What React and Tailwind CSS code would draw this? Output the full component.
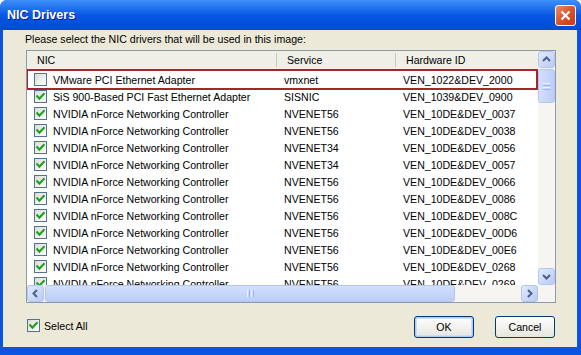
import React from "react";

const rows = [
  { nic: "VMware PCI Ethernet Adapter", svc: "vmxnet", hw: "VEN_1022&DEV_2000", checked: false, hl: true },
  { nic: "SiS 900-Based PCI Fast Ethernet Adapter", svc: "SISNIC", hw: "VEN_1039&DEV_0900", checked: true },
  { nic: "NVIDIA nForce Networking Controller", svc: "NVENET56", hw: "VEN_10DE&DEV_0037", checked: true },
  { nic: "NVIDIA nForce Networking Controller", svc: "NVENET56", hw: "VEN_10DE&DEV_0038", checked: true },
  { nic: "NVIDIA nForce Networking Controller", svc: "NVENET34", hw: "VEN_10DE&DEV_0056", checked: true },
  { nic: "NVIDIA nForce Networking Controller", svc: "NVENET34", hw: "VEN_10DE&DEV_0057", checked: true },
  { nic: "NVIDIA nForce Networking Controller", svc: "NVENET56", hw: "VEN_10DE&DEV_0066", checked: true },
  { nic: "NVIDIA nForce Networking Controller", svc: "NVENET56", hw: "VEN_10DE&DEV_0086", checked: true },
  { nic: "NVIDIA nForce Networking Controller", svc: "NVENET56", hw: "VEN_10DE&DEV_008C", checked: true },
  { nic: "NVIDIA nForce Networking Controller", svc: "NVENET56", hw: "VEN_10DE&DEV_00D6", checked: true },
  { nic: "NVIDIA nForce Networking Controller", svc: "NVENET56", hw: "VEN_10DE&DEV_00E6", checked: true },
  { nic: "NVIDIA nForce Networking Controller", svc: "NVENET56", hw: "VEN_10DE&DEV_0268", checked: true },
  { nic: "NVIDIA nForce Networking Controller", svc: "NVENET56", hw: "VEN_10DE&DEV_0269", checked: true },
];

function CheckBox({ checked }) {
  return (
    <div className="w-[13px] h-[13px] shrink-0 border border-[#52738d] bg-gradient-to-br from-[#dcdcd6] to-[#ffffff] flex items-center justify-center">
      {checked && (
        <svg width="11" height="11" viewBox="0 0 11 11">
          <path d="M2.2 5.2 L4.4 7.6 L8.8 3" fill="none" stroke="#21a121" strokeWidth="2.1" strokeLinecap="square" />
        </svg>
      )}
    </div>
  );
}

function ScrollBtn({ dir }) {
  const paths = {
    up: "M5 10 L8.5 6.5 L12 10",
    down: "M5 7 L8.5 10.5 L12 7",
    left: "M10 5 L6.5 8.5 L10 12",
    right: "M7 5 L10.5 8.5 L7 12",
  };
  return (
    <div className="w-[17px] h-[17px] shrink-0 rounded-[3px] border border-[#b3c6f0] bg-gradient-to-br from-[#e1eafe] to-[#b8cbf6] flex items-center justify-center">
      <svg width="17" height="17" viewBox="0 0 17 17" className="-m-px">
        <path d={paths[dir]} fill="none" stroke="#4d6185" strokeWidth="2" />
      </svg>
    </div>
  );
}

export default function App() {
  const font = { fontFamily: '"Liberation Sans", Arial, sans-serif' };
  return (
    <div className="w-[581px] h-[355px] bg-white" style={font}>
      <div className="w-[581px] h-[355px] flex flex-col rounded-t-[7px] overflow-hidden bg-[#0a55e0]">
        {/* Title bar */}
        <div className="h-[30px] shrink-0 flex items-center justify-between pl-[7px] pr-[5px] bg-gradient-to-b from-[#3d8ff8] via-[#0858e4] to-[#0049d6]">
          <span className="text-white font-bold text-[12.5px] [text-shadow:1px_1px_0_#0a1a8a]">NIC Drivers</span>
          <div className="w-[21px] h-[21px] rounded-[3px] border border-white bg-gradient-to-br from-[#eb8b68] via-[#d9542c] to-[#c23a14] flex items-center justify-center">
            <svg width="13" height="13" viewBox="0 0 13 13">
              <path d="M2.5 2.5 L10.5 10.5 M10.5 2.5 L2.5 10.5" stroke="white" strokeWidth="2.2" />
            </svg>
          </div>
        </div>

        {/* Body */}
        <div className="flex-1 flex flex-col ml-[3px] mr-[4px] mb-[8px] bg-[#ece9d8] pl-[22px] pr-[21px] text-[10.6px] text-black">
          <div className="mt-[3px] h-[13px] leading-[13px]">Please select the NIC drivers that will be used in this image:</div>

          {/* List */}
          <div className="mt-[4px] ml-px h-[253px] border border-[#8d99a8] bg-white flex flex-col">
            <div className="flex flex-1 min-h-0">
              <div className="flex-1 min-w-0 overflow-hidden">
                <div className="w-[560px] relative">
                  {/* header */}
                  <div className="h-[20px] flex bg-[#f0efe7] border-b-2 border-[#d7d4c6]">
                    <div className="w-[250px] shrink-0 flex items-center justify-between pl-[10px]">
                      <span className="pt-[2px]">NIC</span>
                      <div className="w-px h-[14px] bg-[#c9c6b6]" />
                    </div>
                    <div className="w-[119px] shrink-0 flex items-center justify-between pl-[10px]">
                      <span className="pt-[2px]">Service</span>
                      <div className="w-px h-[14px] bg-[#c9c6b6]" />
                    </div>
                    <div className="flex-1 flex items-center pl-[10px]">
                      <span className="pt-[2px]">Hardware ID</span>
                    </div>
                  </div>
                  {/* rows */}
                  {rows.map((r, i) => (
                    <div key={i} className="relative h-[17px] flex items-center">
                      <div className="w-[250px] shrink-0 flex items-center gap-[6px] pl-[7px] whitespace-nowrap">
                        <CheckBox checked={r.checked} />
                        <span className="pt-[2px]">{r.nic}</span>
                      </div>
                      <div className="w-[119px] shrink-0 pl-[7px] pt-[2px]">{r.svc}</div>
                      <div className="flex-1 pl-[7px] pt-[2px]">{r.hw}</div>
                      {r.hl && (
                        <div className="absolute -top-[2px] -bottom-[2px] -left-px w-[512px] border-2 border-[#a3262b] z-10 pointer-events-none" />
                      )}
                    </div>
                  ))}
                </div>
              </div>
              {/* vertical scrollbar */}
              <div className="w-[17px] shrink-0 flex flex-col bg-[#f6f5f1]">
                <ScrollBtn dir="up" />
                <div className="mt-px h-[34px] rounded-[3px] border border-[#b3c6f0] bg-gradient-to-r from-[#d3dffd] to-[#bccef7] flex flex-col items-center justify-center gap-[1px]">
                  <div className="w-[7px] h-px bg-[#eef4fe]" />
                  <div className="w-[7px] h-px bg-[#9ab4ec]" />
                  <div className="w-[7px] h-px bg-[#eef4fe]" />
                  <div className="w-[7px] h-px bg-[#9ab4ec]" />
                </div>
                <div className="flex-1" />
                <ScrollBtn dir="down" />
              </div>
            </div>
            {/* horizontal scrollbar */}
            <div className="h-[17px] shrink-0 flex">
              <div className="flex-1 flex bg-[#f6f5f1]">
                <ScrollBtn dir="left" />
                <div className="ml-px w-[410px] h-[17px] rounded-[3px] border border-[#b3c6f0] bg-gradient-to-b from-[#d3dffd] to-[#bccef7] flex items-center justify-center gap-[1px]">
                  <div className="w-px h-[7px] bg-[#eef4fe]" />
                  <div className="w-px h-[7px] bg-[#9ab4ec]" />
                  <div className="w-px h-[7px] bg-[#eef4fe]" />
                  <div className="w-px h-[7px] bg-[#9ab4ec]" />
                </div>
                <div className="flex-1" />
                <ScrollBtn dir="right" />
              </div>
              <div className="w-[17px] bg-[#f6f5f1]" />
            </div>
          </div>

          {/* bottom row */}
          <div className="mt-[13px] h-[22px] flex items-center">
            <div className="ml-[2px] flex items-center gap-[4px] -mt-[2px]">
              <CheckBox checked />
              <span className="pt-[2px]">Select All</span>
            </div>
            <div className="flex-1" />
            <button className="w-[60px] h-[22px] pt-[1px] rounded-[3px] border border-[#003c74] bg-gradient-to-b from-[#ffffff] to-[#e6e5de] shadow-[inset_0_0_0_1px_#aecbf6,inset_0_0_0_2px_#cfdcf8] text-[10.6px]" style={font}>
              OK
            </button>
            <button className="ml-[21px] mr-px w-[60px] h-[22px] pt-[1px] rounded-[3px] border border-[#003c74] bg-gradient-to-b from-[#ffffff] to-[#e6e5de] text-[10.6px]" style={font}>
              Cancel
            </button>
          </div>
        </div>
      </div>
    </div>
  );
}
